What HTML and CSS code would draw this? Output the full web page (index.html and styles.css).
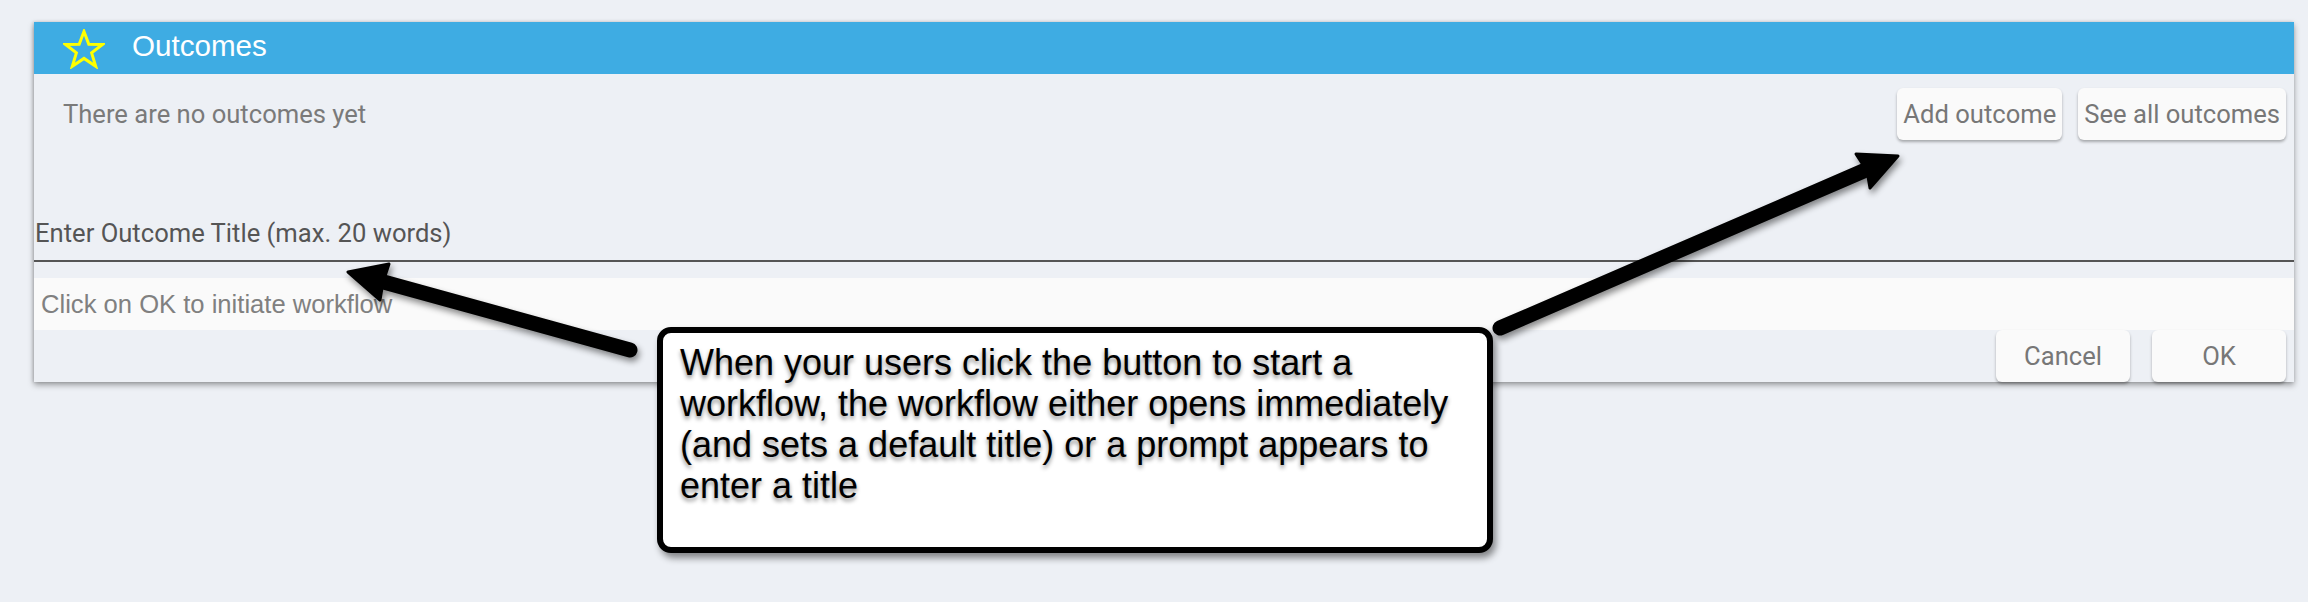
FILE: index.html
```html
<!DOCTYPE html>
<html>
<head>
<meta charset="utf-8">
<link rel="stylesheet" href="styles.css">
</head>
<body>
<div class="page">
  <section class="panel">
    <header class="panel-header">
      <svg class="star" viewBox="0 0 42 40" width="42" height="40">
        <polygon points="21,2.5 25.8,15.2 39.5,15.5 28.6,23.9 32.7,37.3 21,29.4 9.3,37.3 13.4,23.9 2.5,15.5 16.2,15.2" fill="none" stroke="#ffff00" stroke-width="3" stroke-linejoin="miter"/>
      </svg>
      <span class="panel-title">Outcomes</span>
    </header>
    <div class="top-row">
      <span class="empty-text">There are no outcomes yet</span>
      <div class="btn-group">
        <button class="btn">Add outcome</button>
        <button class="btn">See all outcomes</button>
      </div>
    </div>
    <div class="title-label">Enter Outcome Title (max. 20 words)</div>
    <div class="title-field">Click on OK to initiate workflow</div>
    <div class="footer">
      <button class="btn btn-wide">Cancel</button>
      <button class="btn btn-wide">OK</button>
    </div>
  </section>

  <div class="callout">When your users click the button to start a workflow, the workflow either opens immediately (and sets a default title) or a prompt appears to enter a title</div>

  <svg class="arrows" width="2308" height="602" viewBox="0 0 2308 602">
    <g class="arrow">
      <line x1="630" y1="350" x2="380" y2="281" stroke="#000" stroke-width="15" stroke-linecap="round"/>
      <polygon points="348,272 389,264 383,282 380,300" fill="#000" stroke="#000" stroke-width="3" stroke-linejoin="round"/>
    </g>
    <g class="arrow">
      <line x1="1500" y1="328" x2="1868" y2="169" stroke="#000" stroke-width="15" stroke-linecap="round"/>
      <polygon points="1898,156 1870,188 1867,171 1856,154" fill="#000" stroke="#000" stroke-width="3" stroke-linejoin="round"/>
    </g>
  </svg>
</div>
</body>
</html>
```

FILE: styles.css
```css
html, body {
  margin: 0;
  padding: 0;
}
body {
  background: #edf0f5;
  width: 2308px;
  height: 602px;
  overflow: hidden;
}
.page {
  position: relative;
  width: 2308px;
  height: 602px;
  padding-top: 22px;
  box-sizing: border-box;
}
.panel {
  margin-left: 34px;
  width: 2260px;
  height: 360px;
  background: #edf0f5;
  box-shadow: 0 3px 6px rgba(0, 0, 0, 0.35), -1px 0 3px rgba(0, 0, 0, 0.15);
  display: flex;
  flex-direction: column;
}
.panel-header {
  height: 52px;
  background: #3eace3;
  display: flex;
  align-items: center;
  padding-left: 29px;
}
.star {
  display: block;
  margin-top: 1px;
}
.panel-title {
  margin-left: 27px;
  font-family: "Liberation Sans", Arial, sans-serif;
  font-size: 29.6px;
  color: #ffffff;
  line-height: 34px;
  margin-top: -4px;
}
.top-row {
  display: flex;
  justify-content: space-between;
  align-items: center;
  padding: 14px 8px 0 29px;
}
.empty-text {
  font-family: Roboto, sans-serif;
  font-size: 25.6px;
  line-height: 30px;
  color: #7a7a7a;
}
.btn-group {
  display: flex;
  gap: 16px;
}
.btn {
  font-family: Roboto, sans-serif;
  font-size: 25.6px;
  line-height: 30px;
  color: #777777;
  background: #fafafa;
  border: none;
  border-radius: 6px;
  height: 52px;
  padding: 0 6px;
  box-shadow: 0 2px 3px rgba(0, 0, 0, 0.3);
  cursor: pointer;
}
.btn-wide {
  width: 134px;
}
.title-label {
  margin-top: 78px;
  padding-left: 1px;
  padding-bottom: 12px;
  font-family: Roboto, sans-serif;
  font-size: 25.6px;
  line-height: 30px;
  color: #555555;
  border-bottom: 2px solid #555555;
}
.title-field {
  margin-top: 16px;
  height: 52px;
  background: #fafafa;
  display: flex;
  align-items: center;
  padding-left: 7px;
  font-family: "Liberation Sans", Arial, sans-serif;
  font-size: 25.6px;
  color: #808080;
}
.footer {
  display: flex;
  justify-content: flex-end;
  gap: 22px;
  padding-right: 8px;
}
.callout {
  position: absolute;
  left: 657px;
  top: 327px;
  width: 836px;
  height: 226px;
  box-sizing: border-box;
  border: 6px solid #000;
  border-radius: 14px;
  background: #ffffff;
  padding: 9px 20px 0 17px;
  font-family: "Liberation Sans", Arial, sans-serif;
  font-size: 36px;
  line-height: 41px;
  color: #000;
  text-shadow: 0 3px 4px rgba(0, 0, 0, 0.45);
  box-shadow: 3px 5px 7px rgba(0, 0, 0, 0.45);
}
.arrows {
  position: absolute;
  left: 0;
  top: 0;
  pointer-events: none;
}
.arrow {
  filter: drop-shadow(2px 4px 3px rgba(0, 0, 0, 0.45));
}
```
